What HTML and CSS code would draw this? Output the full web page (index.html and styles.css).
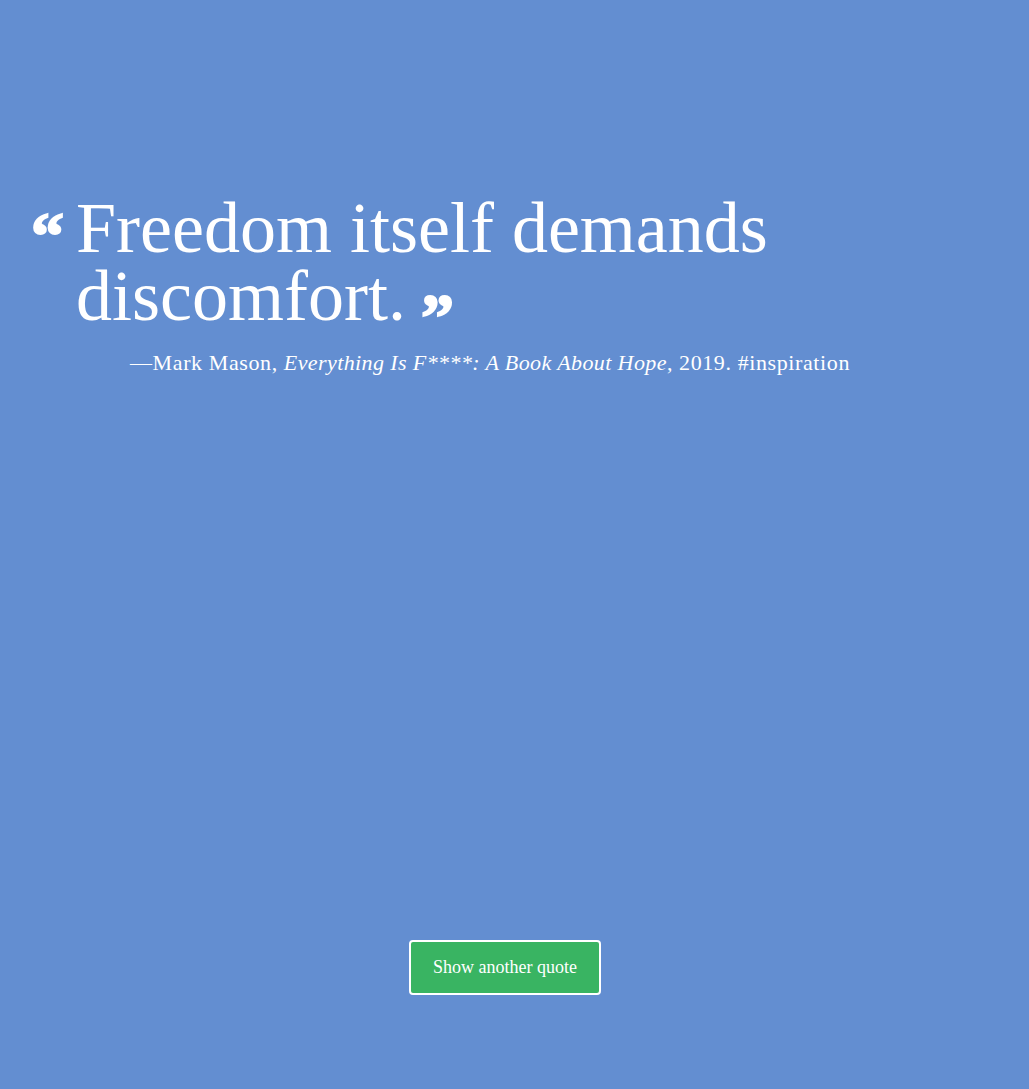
FILE: index.html
```html
<!DOCTYPE html>
<html lang="en">
<head>
<meta charset="utf-8">
<title>Quote</title>
<link rel="stylesheet" href="styles.css">
</head>
<body>
<main class="page">
  <section class="quote">
    <div class="quote-row">
      <span class="mark open">&ldquo;</span>
      <blockquote class="quote-text">Freedom itself demands discomfort.<span class="mark close">&rdquo;</span></blockquote>
    </div>
    <p class="cite">&mdash;Mark Mason, <em>Everything Is F****: A Book About Hope</em>, 2019. #inspiration</p>
  </section>
  <div class="actions">
    <button class="btn" type="button">Show another quote</button>
  </div>
</main>
</body>
</html>
```
FILE: styles.css
```css
html, body {
  margin: 0;
  padding: 0;
}
body {
  background: #638ed1;
  color: #fff;
  font-family: "Liberation Serif", "DejaVu Serif", serif;
  min-height: 1089px;
}
.page {
  display: flex;
  flex-direction: column;
  min-height: 1089px;
}
.quote {
  padding-top: 194px;
  padding-left: 31px;
}
.quote-row {
  display: flex;
  align-items: flex-start;
}
.mark {
  font-family: "Liberation Serif", serif;
  font-weight: bold;
  font-size: 66px;
  line-height: 1;
  -webkit-text-stroke: 2px #fff;
}
.mark.open {
  width: 45px;
  height: 40px;
  padding-top: 9px;
}
.mark.close {
  display: inline-block;
  margin-left: 15px;
  line-height: 24px;
  vertical-align: -19px;
}
.quote-text {
  margin: 0;
  font-size: 72px;
  line-height: 68px;
  max-width: 740px;
}
.cite {
  margin: 20px 0 0 99px;
  font-size: 22px;
  letter-spacing: 0.6px;
}
.cite em {
  letter-spacing: 0.4px;
}
.actions {
  margin-top: 564px;
  padding-left: 409px;
}
.btn {
  width: 192px;
  height: 55px;
  background: #39b462;
  color: #fff;
  border: 2px solid #fff;
  border-radius: 4px;
  font-family: "Liberation Serif", serif;
  font-size: 18px;
  cursor: pointer;
}
```
